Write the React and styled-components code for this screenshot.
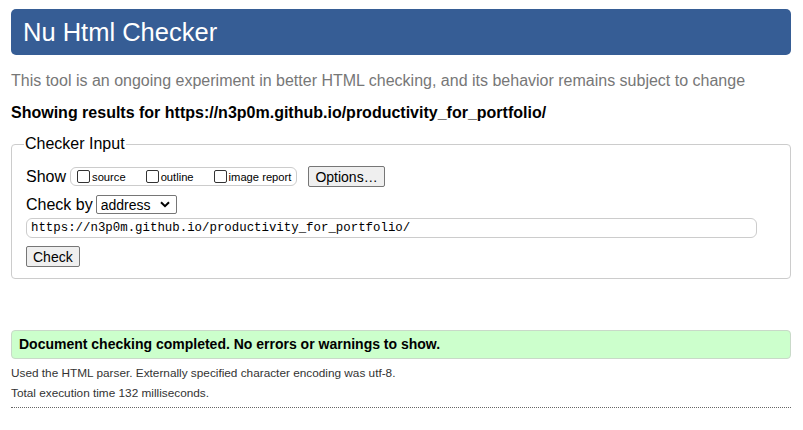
import React from "react";
import styled, { createGlobalStyle } from "styled-components";

const GlobalStyle = createGlobalStyle`
  body {
    margin: 0;
    background: #fff;
    font-family: "Liberation Sans", Arial, sans-serif;
    color: #000;
  }
`;

const Page = styled.div`
  width: 803px;
  padding: 9px 12px 0 11px;
  box-sizing: border-box;
`;

const Header = styled.h1`
  margin: 0;
  height: 46px;
  background: #365d95;
  border-radius: 5px;
  color: #fff;
  font-size: 25.5px;
  font-weight: normal;
  line-height: 46px;
  padding-left: 12px;
`;

const Intro = styled.p`
  margin: 16px 0 0;
  font-size: 16px;
  line-height: 20px;
  color: #777;
`;

const ResultsFor = styled.p`
  margin: 12px 0 0;
  font-size: 16px;
  font-weight: bold;
  line-height: 20px;
`;

const Fieldset = styled.fieldset`
  margin: 12px 0 0;
  padding: 4px 14px 11px;
  border: 1px solid #ccc;
  border-radius: 4px;
  min-width: 0;
`;

const Legend = styled.legend`
  padding: 0 1px;
  margin-left: -2px;
  font-size: 16px;
  line-height: 18px;
`;

const Row = styled.div`
  display: flex;
  align-items: center;
  margin-top: ${(p) => p.$top || 0}px;
`;

const Label = styled.span`
  font-size: 16px;
  margin-right: ${(p) => p.$gap || 4}px;
`;

const Group = styled.div`
  display: flex;
  align-items: center;
  height: 17px;
  border: 1px solid #ccc;
  border-radius: 6px;
  padding: 0 5px 0 6px;
`;

const CheckLabel = styled.label`
  display: flex;
  align-items: center;
  font-size: 11.2px;
  margin-right: ${(p) => p.$gap || 0}px;
`;

const Box = styled.input.attrs({ type: "checkbox" })`
  appearance: none;
  width: 13px;
  height: 13px;
  margin: 0 2px 0 0;
  border: 1px solid #333;
  border-radius: 2px;
  background: #fff;
`;

const Button = styled.button`
  font-family: "Liberation Sans", Arial, sans-serif;
  font-size: 14px;
  height: 21px;
  padding: 0 ${(p) => p.$px || 7}px;
  background: #efefef;
  border: 1px solid #767676;
  border-radius: 2px;
  color: #000;
  margin-left: ${(p) => p.$ml || 0}px;
`;

const SelectWrap = styled.span`
  position: relative;
  display: inline-block;
`;

const Select = styled.select`
  appearance: none;
  width: 81px;
  height: 19px;
  font-family: "Liberation Sans", Arial, sans-serif;
  font-size: 14px;
  padding: 0 0 0 4px;
  border: 1px solid #767676;
  border-radius: 2px;
  background: #fff;
  color: #000;
  display: block;
`;

const Chevron = styled.svg`
  position: absolute;
  right: 7px;
  top: 6px;
  pointer-events: none;
`;

const UrlInput = styled.input`
  width: 731px;
  height: 20px;
  box-sizing: border-box;
  border: 1px solid #ccc;
  border-radius: 6px;
  padding: 0 4px;
  font-family: "Liberation Mono", "DejaVu Sans Mono", monospace;
  font-size: 12.4px;
  color: #000;
`;

const Success = styled.p`
  margin: 51px 0 0;
  height: 27px;
  line-height: 27px;
  background: #ccffcc;
  border: 1px solid #c9d9c9;
  border-radius: 4px;
  padding-left: 7px;
  font-size: 14px;
  font-weight: bold;
`;

const Detail = styled.p`
  margin: ${(p) => p.$top || 0}px 0 0;
  font-size: 11.8px;
  line-height: 20px;
  color: #333;
`;

const Rule = styled.hr`
  margin: 4px 0 0;
  border: 0;
  border-top: 1px dotted #666;
`;

export default function App() {
  return (
    <Page>
      <GlobalStyle />
      <Header>Nu Html Checker</Header>
      <Intro>
        This tool is an ongoing experiment in better HTML checking, and its
        behavior remains subject to change
      </Intro>
      <ResultsFor>
        Showing results for https://n3p0m.github.io/productivity_for_portfolio/
      </ResultsFor>
      <Fieldset>
        <Legend>Checker Input</Legend>
        <Row $top={9}>
          <Label>Show</Label>
          <Group>
            <CheckLabel $gap={20}>
              <Box />
              source
            </CheckLabel>
            <CheckLabel $gap={20}>
              <Box />
              outline
            </CheckLabel>
            <CheckLabel>
              <Box />
              image report
            </CheckLabel>
          </Group>
          <Button $ml={11} $px={6}>Options…</Button>
        </Row>
        <Row $top={8}>
          <Label $gap={3}>Check by</Label>
          <SelectWrap>
            <Select defaultValue="address">
              <option value="address">address</option>
              <option value="file">file upload</option>
              <option value="text">text input</option>
            </Select>
            <Chevron width="10" height="7" viewBox="0 0 10 7">
              <path d="M1 1.2 L5 5.2 L9 1.2" fill="none" stroke="#000" strokeWidth="2" />
            </Chevron>
          </SelectWrap>
        </Row>
        <Row $top={4}>
          <UrlInput
            readOnly
            value="https://n3p0m.github.io/productivity_for_portfolio/"
          />
        </Row>
        <Row $top={8}>
          <Button $px={6}>Check</Button>
        </Row>
      </Fieldset>
      <Success>Document checking completed. No errors or warnings to show.</Success>
      <Detail $top={4}>
        Used the HTML parser. Externally specified character encoding was utf-8.
      </Detail>
      <Detail>Total execution time 132 milliseconds.</Detail>
      <Rule />
    </Page>
  );
}
